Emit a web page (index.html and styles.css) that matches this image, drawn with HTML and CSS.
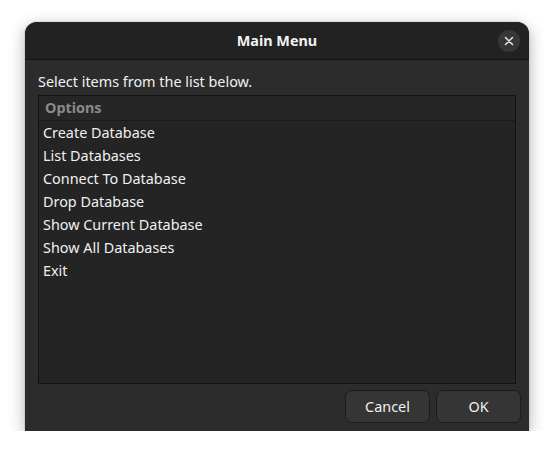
FILE: index.html
```html
<!DOCTYPE html>
<html>
<head>
<meta charset="utf-8">
<link rel="stylesheet" href="styles.css">
</head>
<body>
<div class="window">
  <div class="titlebar">
    <div class="title">Main Menu</div>
    <button class="close" aria-label="Close">
      <svg width="10" height="10" viewBox="0 0 10 10"><path d="M1.5 1.5 L8.5 8.5 M8.5 1.5 L1.5 8.5" stroke="#e8e8e8" stroke-width="1.5" stroke-linecap="round"/></svg>
    </button>
  </div>
  <div class="content">
    <div class="prompt">Select items from the list below.</div>
    <div class="list">
      <div class="list-header">Options</div>
      <div class="list-items">
        <div class="item">Create Database</div>
        <div class="item">List Databases</div>
        <div class="item">Connect To Database</div>
        <div class="item">Drop Database</div>
        <div class="item">Show Current Database</div>
        <div class="item">Show All Databases</div>
        <div class="item">Exit</div>
      </div>
    </div>
    <div class="actions">
      <button class="btn">Cancel</button>
      <button class="btn">OK</button>
    </div>
  </div>
</div>
</body>
</html>
```
FILE: styles.css
```css
html, body {
  margin: 0;
  padding: 0;
  background: #ffffff;
}
body {
  padding: 22px 0 0 25px;
  font-family: "Noto Sans", "DejaVu Sans", sans-serif;
  font-size: 14.4px;
  color: #f0f0f0;
}
.window {
  width: 504px;
  height: 409px;
  background: #2c2c2c;
  border-radius: 12px 12px 0 0;
  box-shadow: 0 4px 16px rgba(0,0,0,0.32), 0 0 0 1px rgba(0,0,0,0.06);
  display: flex;
  flex-direction: column;
  overflow: hidden;
}
.titlebar {
  height: 37px;
  flex: none;
  background: #222222;
  border-bottom: 1px solid #141414;
  display: flex;
  align-items: center;
  justify-content: center;
  position: relative;
}
.title {
  font-weight: bold;
  font-size: 14.4px;
  color: #f2f2f2;
}
.close {
  position: absolute;
  right: 9px;
  top: 8px;
  width: 22px;
  height: 22px;
  border-radius: 50%;
  border: none;
  padding: 0;
  background: #373737;
  display: flex;
  align-items: center;
  justify-content: center;
}
.content {
  flex: 1;
  display: flex;
  flex-direction: column;
  padding: 10px 8px 9px 13px;
}
.prompt {
  height: 24px;
  line-height: 24px;
  color: #f0f0f0;
  margin-bottom: 1px;
}
.list {
  flex: none;
  height: 287px;
  width: 476px;
  background: #242424;
  border: 1px solid #141414;
  display: flex;
  flex-direction: column;
}
.list-header {
  height: 24px;
  line-height: 24px;
  padding-left: 6px;
  font-weight: bold;
  color: #8a8a8a;
  border-bottom: 1px solid #1a1a1a;
  background: #262626;
}
.item {
  height: 23px;
  line-height: 23px;
  padding-left: 4px;
  color: #f0f0f0;
}
.actions {
  margin-top: 6px;
  display: flex;
  justify-content: flex-end;
  gap: 6px;
}
.btn {
  width: 85px;
  height: 33px;
  background: #353535;
  border: 1px solid #1c1c1c;
  border-radius: 7px;
  color: #f0f0f0;
  font-family: inherit;
  font-size: 14.4px;
  padding: 0;
}
```
